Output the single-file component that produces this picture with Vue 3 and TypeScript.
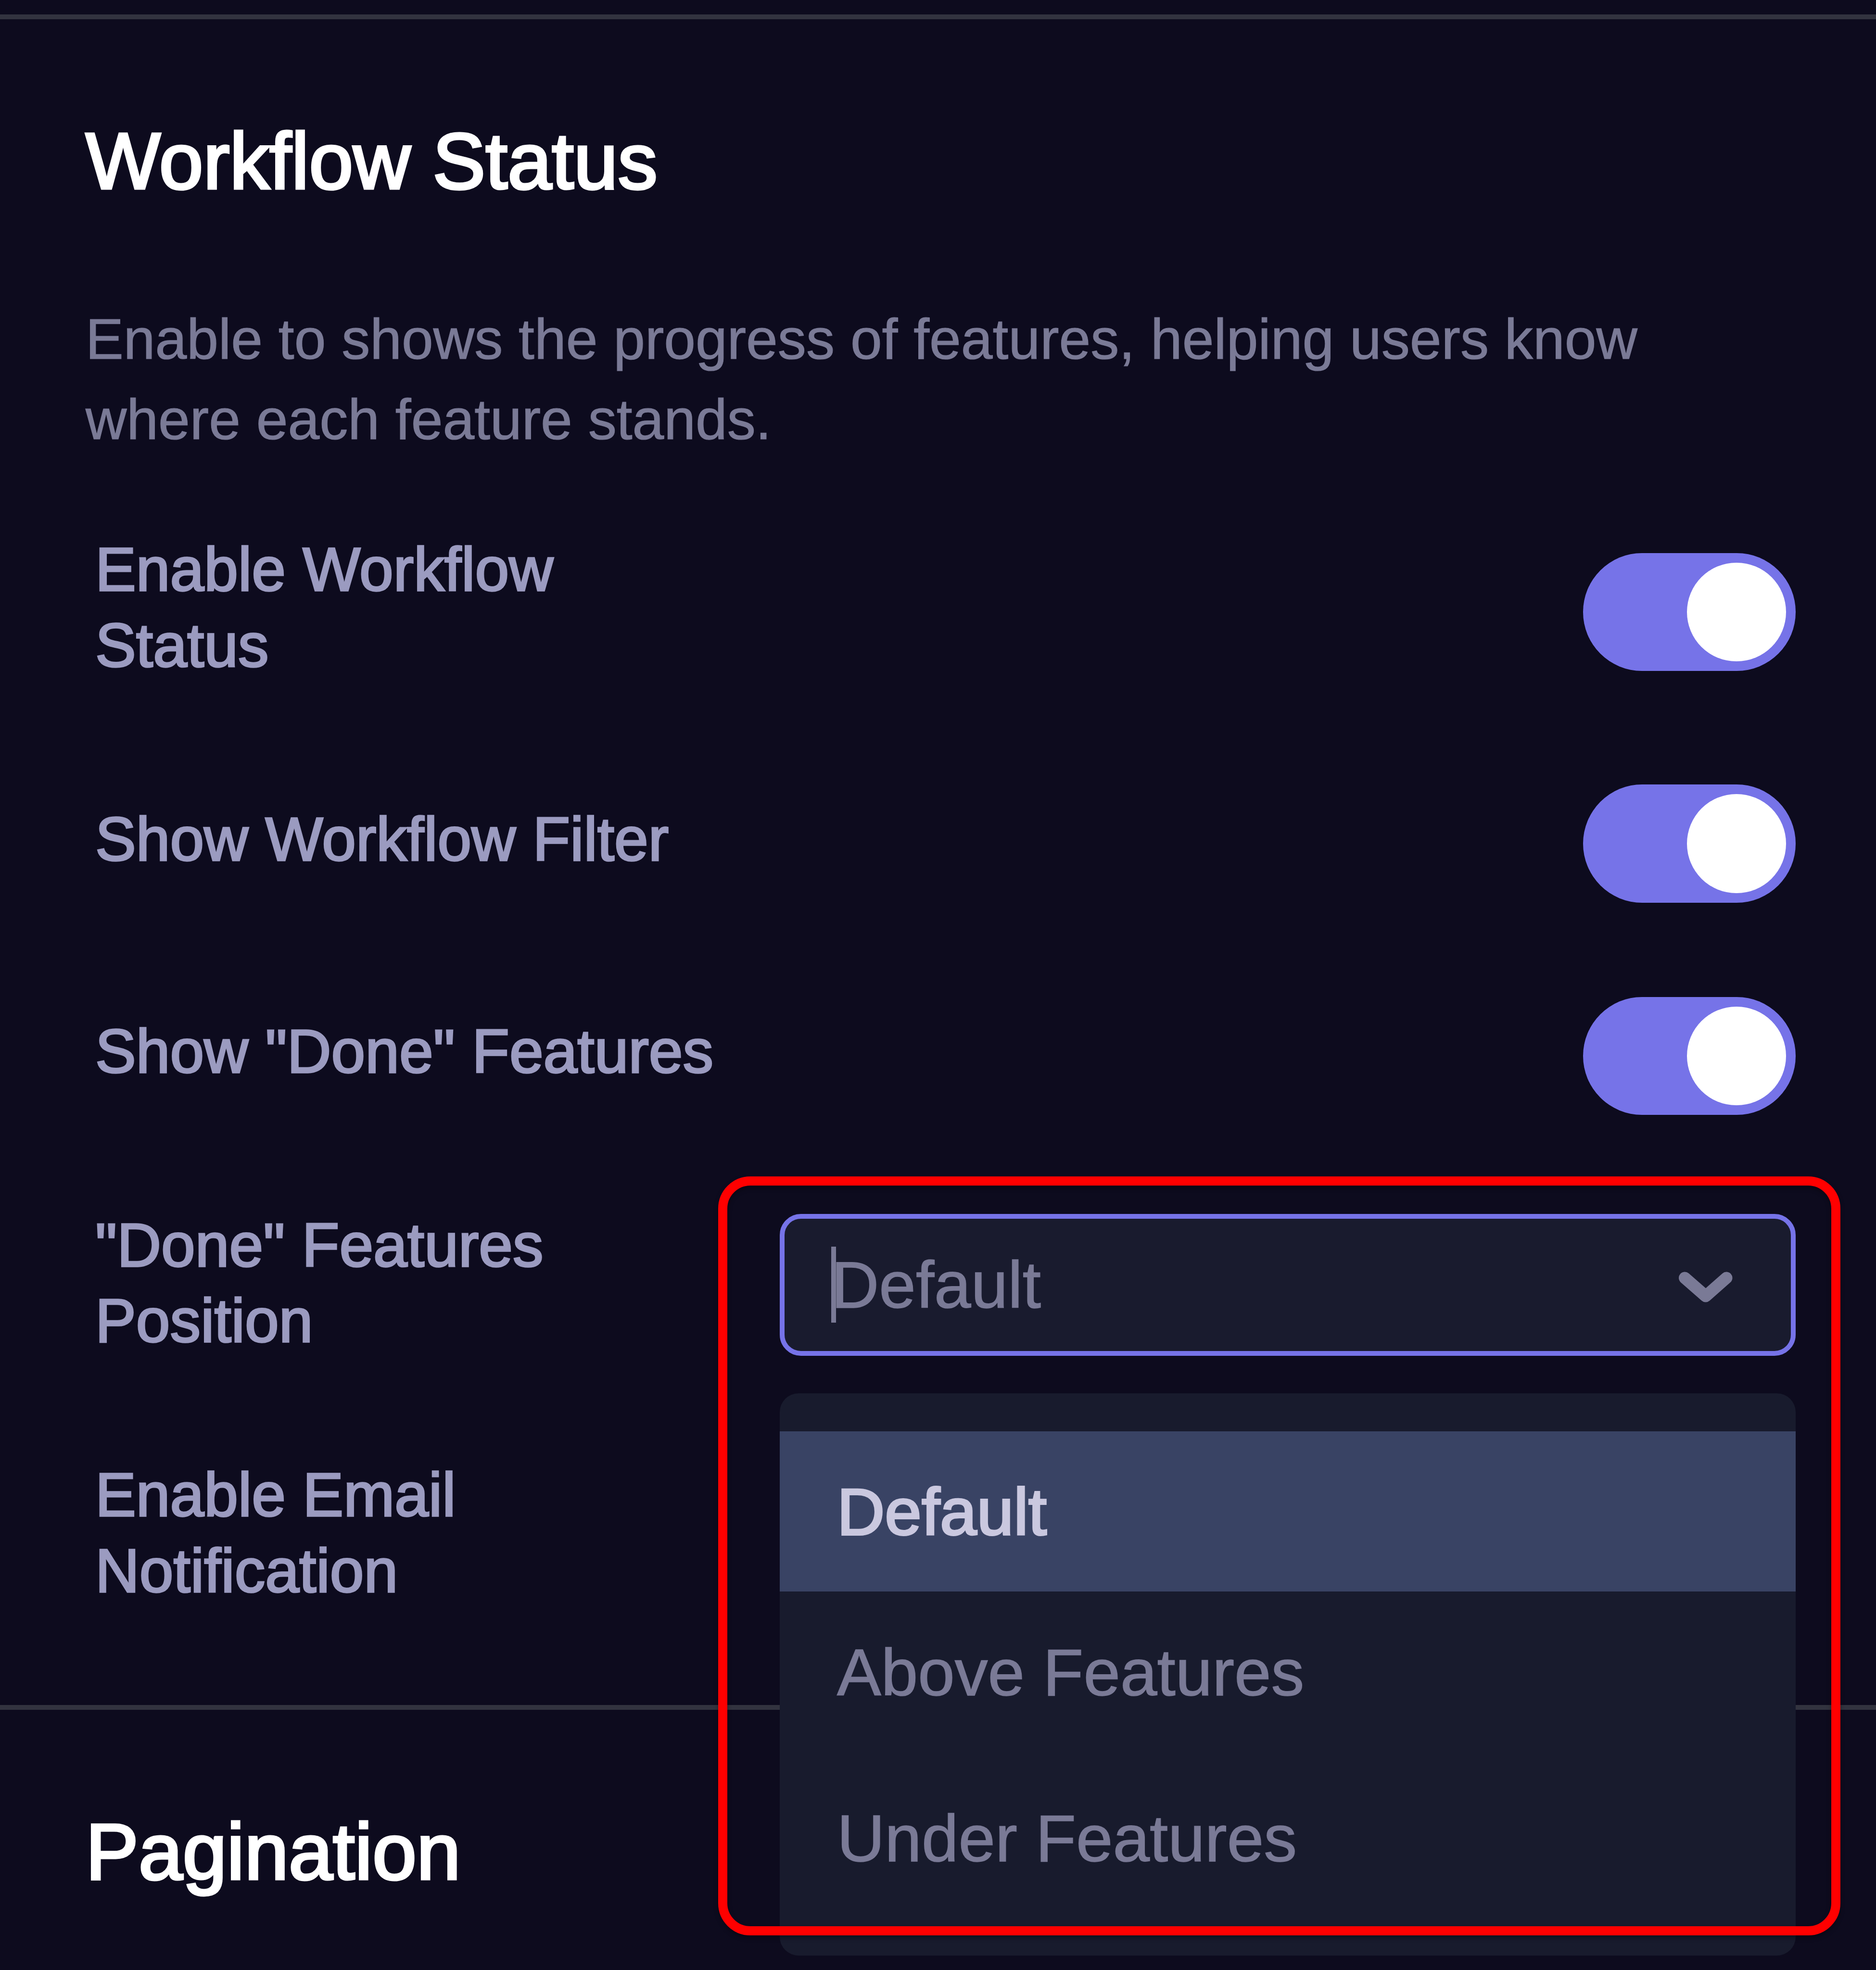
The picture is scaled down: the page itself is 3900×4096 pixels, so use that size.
<script setup lang="ts">
import { ref } from 'vue'

interface ToggleRow {
  id: string
  label: string
  enabled: boolean
}

const toggles = ref<ToggleRow[]>([
  { id: 'status', label: 'Enable Workflow Status', enabled: true },
  { id: 'filter', label: 'Show Workflow Filter', enabled: true },
  { id: 'done', label: 'Show "Done" Features', enabled: true },
])

const options: string[] = ['Default', 'Above Features', 'Under Features']
const selected = ref<string>('Default')
</script>

<template>
  <main class="page">
    <section class="section">
      <h2 class="title">Workflow Status</h2>
      <p class="description">
        Enable to shows the progress of features, helping users know<br />
        where each feature stands.
      </p>

      <div class="rows">
        <div v-for="row in toggles" :key="row.id" class="row" :class="`row-${row.id}`">
          <span class="label">{{ row.label }}</span>
          <button
            class="switch"
            :class="{ on: row.enabled }"
            role="switch"
            :aria-checked="row.enabled"
            @click="row.enabled = !row.enabled"
          >
            <span class="knob"></span>
          </button>
        </div>

        <div class="row row-position">
          <span class="label">"Done" Features Position</span>
          <div class="select">
            <div class="control">
              <span class="value"><span class="caret"></span>{{ selected }}</span>
              <svg class="chevron" viewBox="0 0 118 70" fill="none">
                <path d="M15.5 14 L59 52 L102 14" stroke="#7a7a96" stroke-width="25" stroke-linecap="round" stroke-linejoin="round" />
              </svg>
            </div>
            <ul class="menu">
              <li
                v-for="option in options"
                :key="option"
                class="option"
                :class="{ active: option === selected }"
                @click="selected = option"
              >
                {{ option }}
              </li>
            </ul>
          </div>
        </div>

        <div class="row row-email">
          <span class="label">Enable Email Notification</span>
        </div>
      </div>
    </section>

    <section class="section">
      <h2 class="title">Pagination</h2>
    </section>

    <div class="highlight"></div>
  </main>
</template>

<style>
html,
body {
  margin: 0;
  background: #0d0b1e;
}
</style>

<style scoped>
.page {
  position: relative;
  box-sizing: border-box;
  width: 3900px;
  height: 4096px;
  padding-top: 29.5px;
  overflow: hidden;
  background: #0d0b1e;
  font-family: 'Liberation Sans', Arial, Helvetica, sans-serif;
}

.section {
  border-top: 10px solid #32333f;
  padding: 195px 167px 0 178px;
}

.title {
  margin: 0;
  color: #fff;
  font-size: 165px;
  font-weight: 400;
  line-height: 200px;
  -webkit-text-stroke: 5px #fff;
}

.description {
  margin: 187.3px 0 0;
  color: #7a7a96;
  font-size: 118.2px;
  line-height: 167px;
  white-space: nowrap;
  -webkit-text-stroke: 1.2px #7a7a96;
}

.rows {
  display: flex;
  flex-direction: column;
  margin-top: 148.7px;
  padding-left: 20px;
}

.row {
  display: flex;
  align-items: center;
  justify-content: space-between;
}

.row-filter {
  margin-top: 190.8px;
}

.row-done {
  margin-top: 196px;
}

.row-position {
  align-items: flex-start;
  height: 315px;
  margin-top: 190.6px;
}

.row-email {
  height: 315px;
  margin: 205.4px 0 200.6px;
}

.label {
  max-width: 1320px;
  padding: 2px 0 19px;
  color: #9b9bc0;
  font-size: 127.2px;
  line-height: 157.4px;
  -webkit-text-stroke: 3.5px #9b9bc0;
}

.row-email .label {
  padding-bottom: 0;
}

.switch {
  display: flex;
  box-sizing: border-box;
  flex: none;
  width: 442.5px;
  height: 245.6px;
  padding: 20px;
  border: 0;
  border-radius: 124px;
  background: #32333f;
}

.switch.on {
  justify-content: flex-end;
  background: #7673e8;
}

.knob {
  width: 205.6px;
  height: 205.6px;
  border-radius: 50%;
  background: #fff;
}

.select {
  position: relative;
  flex: none;
  width: 2112.5px;
  margin-top: 14.9px;
}

.control {
  display: flex;
  box-sizing: border-box;
  align-items: center;
  justify-content: space-between;
  height: 295px;
  padding: 0 118px 0 97.5px;
  border: 10px solid #7673e8;
  border-radius: 44px;
  background: #191b2e;
}

.value {
  position: relative;
  color: #7a7a96;
  font-size: 137.6px;
  line-height: 158px;
  -webkit-text-stroke: 1.5px #7a7a96;
}

.caret {
  position: absolute;
  top: 0;
  left: 0;
  width: 10px;
  height: 158px;
  background: #7a7a96;
}

.chevron {
  width: 118px;
  height: 70px;
  margin-top: 14px;
}

.menu {
  position: absolute;
  top: 373.2px;
  left: 0;
  box-sizing: border-box;
  width: 100%;
  height: 1169.4px;
  margin: 0;
  padding: 79px 0 78px;
  border-radius: 39px;
  background: #181b2d;
  list-style: none;
}

.option {
  height: 333.4px;
  padding-left: 119.5px;
  color: #7a7a96;
  font-size: 137.6px;
  line-height: 336.5px;
  -webkit-text-stroke: 1.5px #7a7a96;
}

.option:nth-child(2) {
  height: 344.5px;
}

.option.active {
  background: #394364;
  color: #cac8df;
  line-height: 334.5px;
  -webkit-text-stroke: 4px #cac8df;
}

.highlight {
  position: absolute;
  top: 2445.5px;
  left: 1493.3px;
  box-sizing: border-box;
  width: 2333px;
  height: 1578.5px;
  border: 19px solid #f00;
  border-radius: 67px;
  filter: drop-shadow(0 5px 5px rgba(0, 0, 0, 0.35));
  pointer-events: none;
}
</style>
